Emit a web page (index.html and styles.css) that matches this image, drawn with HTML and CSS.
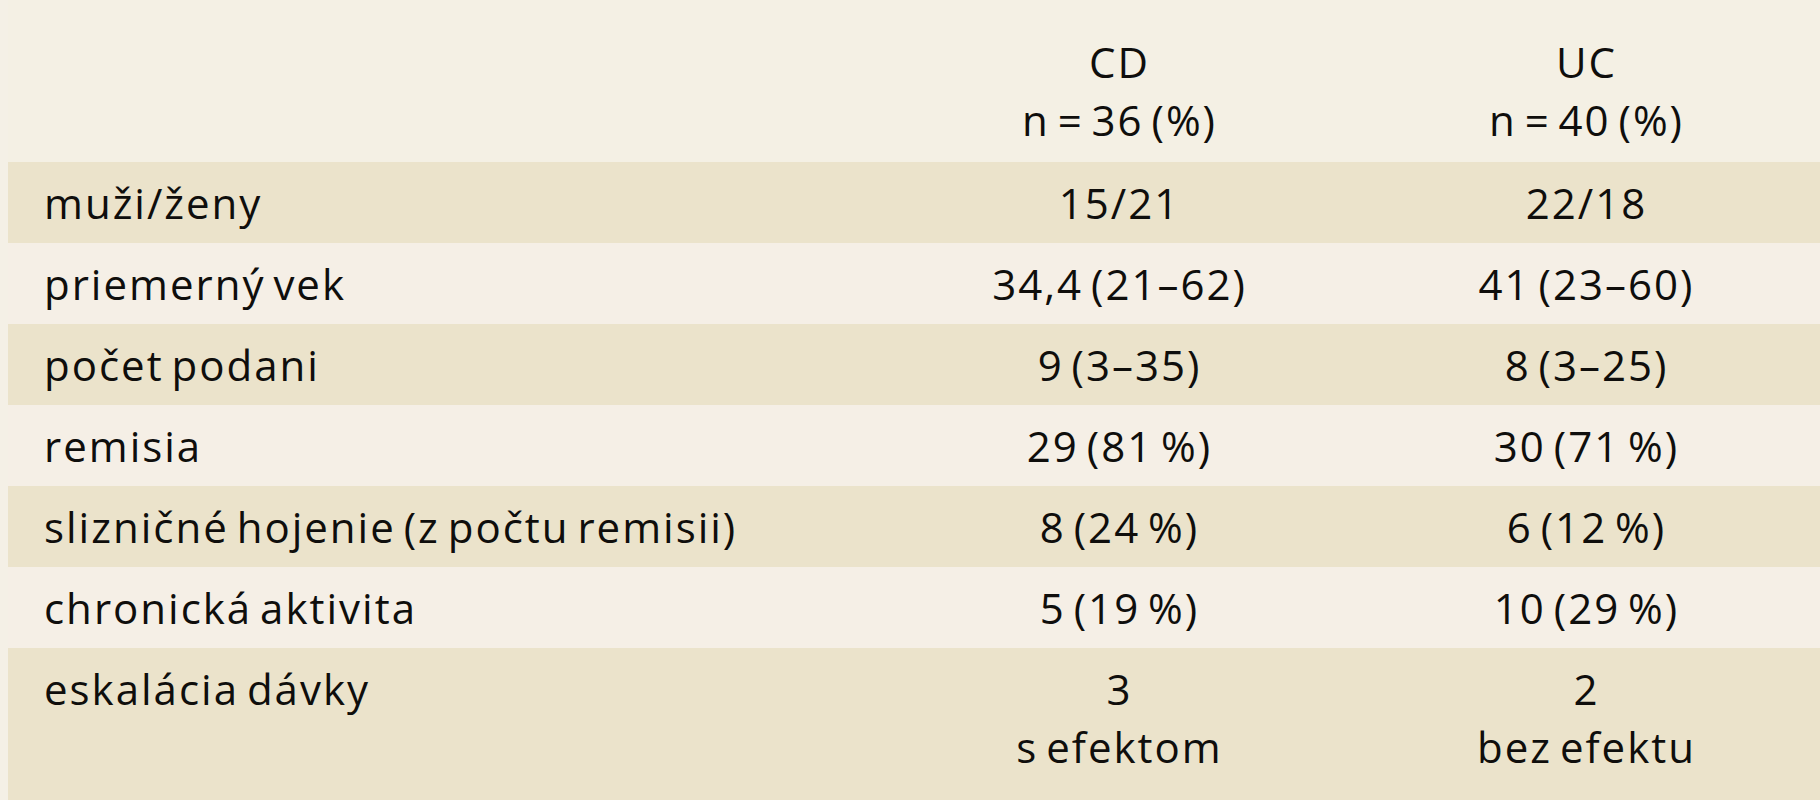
FILE: index.html
```html
<!DOCTYPE html>
<html lang="sk">
<head>
<meta charset="utf-8">
<title>CD / UC</title>
<link rel="stylesheet" href="styles.css">
</head>
<body>
<div class="page">
  <table class="data">
    <colgroup>
      <col class="c-label">
      <col class="c-val">
      <col class="c-val">
    </colgroup>
    <thead>
      <tr class="head">
        <th class="label"></th>
        <th class="val">CD<br>n = 36 (%)</th>
        <th class="val">UC<br>n = 40 (%)</th>
      </tr>
    </thead>
    <tbody>
      <tr class="dark"><td class="label">muži/ženy</td><td class="val">15/21</td><td class="val">22/18</td></tr>
      <tr class="light"><td class="label">priemerný vek</td><td class="val">34,4 (21–62)</td><td class="val">41 (23–60)</td></tr>
      <tr class="dark"><td class="label">počet podani</td><td class="val">9 (3–35)</td><td class="val">8 (3–25)</td></tr>
      <tr class="light"><td class="label">remisia</td><td class="val">29 (81 %)</td><td class="val">30 (71 %)</td></tr>
      <tr class="dark"><td class="label">slizničné hojenie (z počtu remisii)</td><td class="val">8 (24 %)</td><td class="val">6 (12 %)</td></tr>
      <tr class="light"><td class="label">chronická aktivita</td><td class="val">5 (19 %)</td><td class="val">10 (29 %)</td></tr>
      <tr class="dark last"><td class="label">eskalácia dávky</td><td class="val">3<br>s efektom</td><td class="val">2<br>bez efektu</td></tr>
    </tbody>
  </table>
</div>
</body>
</html>
```
FILE: styles.css
```css
html, body {
  margin: 0;
  padding: 0;
  height: 800px;
  overflow: hidden;
  background: #f4f0e6;
}

.page {
  padding-left: 8px;
}

.data {
  width: 1812px;
  table-layout: fixed;
  border-collapse: collapse;
  border-spacing: 0;
  font-family: "Open Sans", "Liberation Sans", sans-serif;
  font-size: 42px;
  font-weight: 500;
  letter-spacing: 2px;
  word-spacing: -5px;
  line-height: 58px;
  color: #0f0e0c;
}

.c-label { width: 878px; }
.c-val { width: 467px; }

.data th,
.data td {
  padding: 12px 0 11px 0;
  font-weight: 500;
  vertical-align: top;
  white-space: nowrap;
}

.data .label {
  text-align: left;
  padding-left: 36px;
}

.data .val {
  text-align: center;
}

.head th {
  background: #f4f0e4;
  padding-top: 33px;
  padding-bottom: 13px;
  height: 116px;
}

.dark td { background: #ebe3cb; }
.light td { background: #f5efe6; }

.last td {
  height: 129px;
}
```
